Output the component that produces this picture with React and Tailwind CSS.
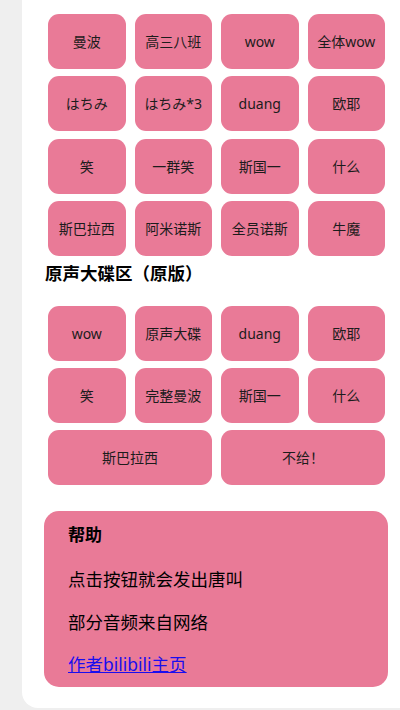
import React from "react";

const font = { fontFamily: '"Noto Sans", "Noto Sans CJK SC", sans-serif' };

const group1 = [
  "曼波", "高三八班", "wow", "全体wow",
  "はちみ", "はちみ*3", "duang", "欧耶",
  "笑", "一群笑", "斯国一", "什么",
  "斯巴拉西", "阿米诺斯", "全员诺斯", "牛魔",
];

const group2 = ["wow", "原声大碟", "duang", "欧耶", "笑", "完整曼波", "斯国一", "什么"];

function Btn({ label, wide }) {
  return (
    <button
      className={
        "h-[55px] rounded-[11px] bg-[#e97a97] text-[14px] text-[#1c1c1c] flex items-center justify-center " +
        (wide ? "col-span-2" : "")
      }
    >
      {label}
    </button>
  );
}

export default function App() {
  return (
    <div className="w-[400px] h-[710px] bg-[#efefef] pl-[22px] pb-[2px] overflow-hidden" style={font}>
      <div className="h-full bg-white rounded-bl-[16px] pl-[26px] pr-[15px] pt-[14px] flex flex-col">
        <div className="grid grid-cols-4 gap-x-[9px] gap-y-[7.3px]">
          {group1.map((l, i) => (
            <Btn key={i} label={l} />
          ))}
        </div>
        <h2 className="-ml-[3px] mt-[5px] mb-[21px] h-[24px] leading-[24px] text-[17.5px] font-bold text-black">
          原声大碟区（原版）
        </h2>
        <div className="grid grid-cols-4 gap-x-[9px] gap-y-[7px]">
          {group2.map((l, i) => (
            <Btn key={i} label={l} />
          ))}
          <Btn label="斯巴拉西" wide />
          <Btn label="不给！" wide />
        </div>
        <div className="-ml-[4px] -mr-[3px] mt-[26px] h-[176px] rounded-[15px] bg-[#e97a97] pl-[24px] pt-[12px] text-black">
          <h3 className="h-[24px] leading-[24px] text-[17px] font-bold">帮助</h3>
          <p className="mt-[20px] h-[24px] leading-[24px] text-[17.5px]">点击按钮就会发出唐叫</p>
          <p className="mt-[19px] h-[24px] leading-[24px] text-[17.5px]">部分音频来自网络</p>
          <a href="#" className="block mt-[18px] h-[24px] leading-[24px] text-[17.5px] text-[#1a0dee] underline">
            作者bilibili主页
          </a>
        </div>
      </div>
    </div>
  );
}
